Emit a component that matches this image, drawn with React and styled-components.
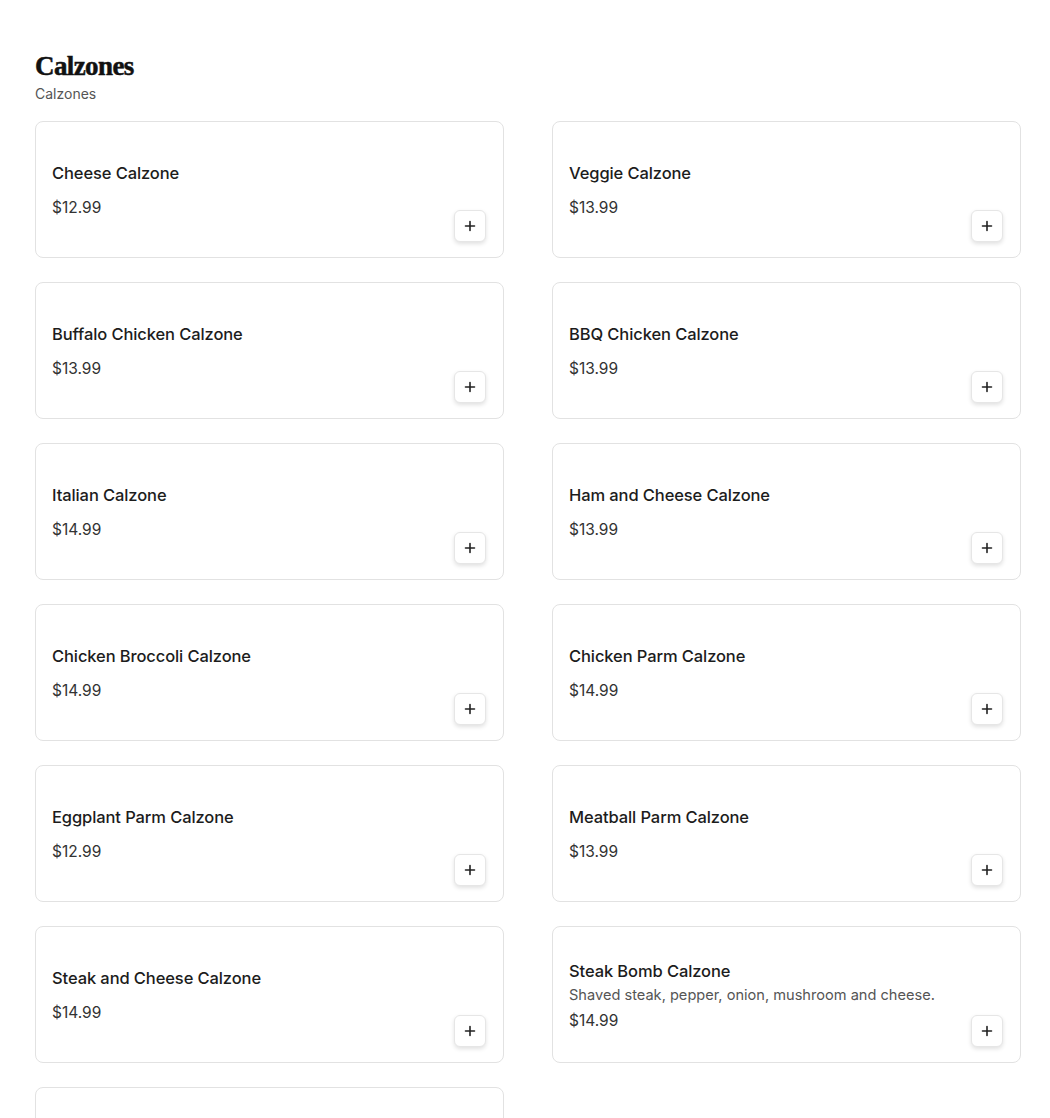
import React from "react";
import styled, { createGlobalStyle } from "styled-components";

const Global = createGlobalStyle`
  html, body { margin: 0; padding: 0; background: #fff; }
  body { font-family: Inter, "Open Sans", sans-serif; color: #1a1a1a; }
  * { box-sizing: border-box; }
`;

const Page = styled.div`
  padding: 50px 30px 0 35px;
  height: 1118px;
  overflow: hidden;
`;

const Header = styled.header`
  margin-bottom: 18px;
`;

const Title = styled.h1`
  margin: 0;
  font-family: "Liberation Serif", "DejaVu Serif", serif;
  font-weight: 900;
  font-size: 27px;
  letter-spacing: -0.6px;
  line-height: 32px;
  color: #111;
  -webkit-text-stroke: 0.5px #111;
`;

const Subtitle = styled.div`
  margin-top: 3px;
  font-size: 14px;
  line-height: 18px;
  color: #555;
`;

const Grid = styled.div`
  display: grid;
  grid-template-columns: 469px 469px;
  column-gap: 48px;
  row-gap: 24px;
`;

const Card = styled.div`
  display: flex;
  align-items: center;
  min-height: 137px;
  padding: 16px 16px 15px 16px;
  border: 1px solid #e2e2e2;
  border-radius: 8px;
  background: #fff;
`;

const Info = styled.div`
  flex: 1;
  display: flex;
  flex-direction: column;
`;

const Name = styled.div`
  font-size: 16.5px;
  font-weight: 500;
  line-height: 22px;
  color: #1c1c1c;
  letter-spacing: -0.1px;
`;

const Desc = styled.div`
  margin-top: 4px;
  font-size: 14.6px;
  line-height: 18px;
  color: #555;
`;

const Price = styled.div`
  margin-top: ${(p) => (p.$tight ? "7px" : "14px")};
  font-size: 15.5px;
  line-height: 20px;
  color: #333;
`;

const AddButton = styled.button`
  align-self: flex-end;
  width: 32px;
  height: 32px;
  margin-right: 1px;
  display: flex;
  align-items: center;
  justify-content: center;
  padding: 0;
  border: 1px solid #e6e6e6;
  border-radius: 6px;
  background: #fff;
  box-shadow: 0 2px 4px rgba(0, 0, 0, 0.12);
  cursor: pointer;
`;

const items = [
  { name: "Cheese Calzone", price: "$12.99" },
  { name: "Veggie Calzone", price: "$13.99" },
  { name: "Buffalo Chicken Calzone", price: "$13.99" },
  { name: "BBQ Chicken Calzone", price: "$13.99" },
  { name: "Italian Calzone", price: "$14.99" },
  { name: "Ham and Cheese Calzone", price: "$13.99" },
  { name: "Chicken Broccoli Calzone", price: "$14.99" },
  { name: "Chicken Parm Calzone", price: "$14.99" },
  { name: "Eggplant Parm Calzone", price: "$12.99" },
  { name: "Meatball Parm Calzone", price: "$13.99" },
  { name: "Steak and Cheese Calzone", price: "$14.99" },
  {
    name: "Steak Bomb Calzone",
    desc: "Shaved steak, pepper, onion, mushroom and cheese.",
    price: "$14.99",
  },
  { name: "", price: "" },
];

const Plus = () => (
  <svg width="12" height="12" viewBox="0 0 12 12" fill="none">
    <path d="M6 1.5v9M1.5 6h9" stroke="#222" strokeWidth="1.6" strokeLinecap="round" />
  </svg>
);

export default function App() {
  return (
    <Page>
      <Global />
      <Header>
        <Title>Calzones</Title>
        <Subtitle>Calzones</Subtitle>
      </Header>
      <Grid>
        {items.map((it, i) => (
          <Card key={i}>
            <Info>
              <Name>{it.name}</Name>
              {it.desc && <Desc>{it.desc}</Desc>}
              <Price $tight={!!it.desc}>{it.price}</Price>
            </Info>
            <AddButton aria-label="Add">
              <Plus />
            </AddButton>
          </Card>
        ))}
      </Grid>
    </Page>
  );
}
